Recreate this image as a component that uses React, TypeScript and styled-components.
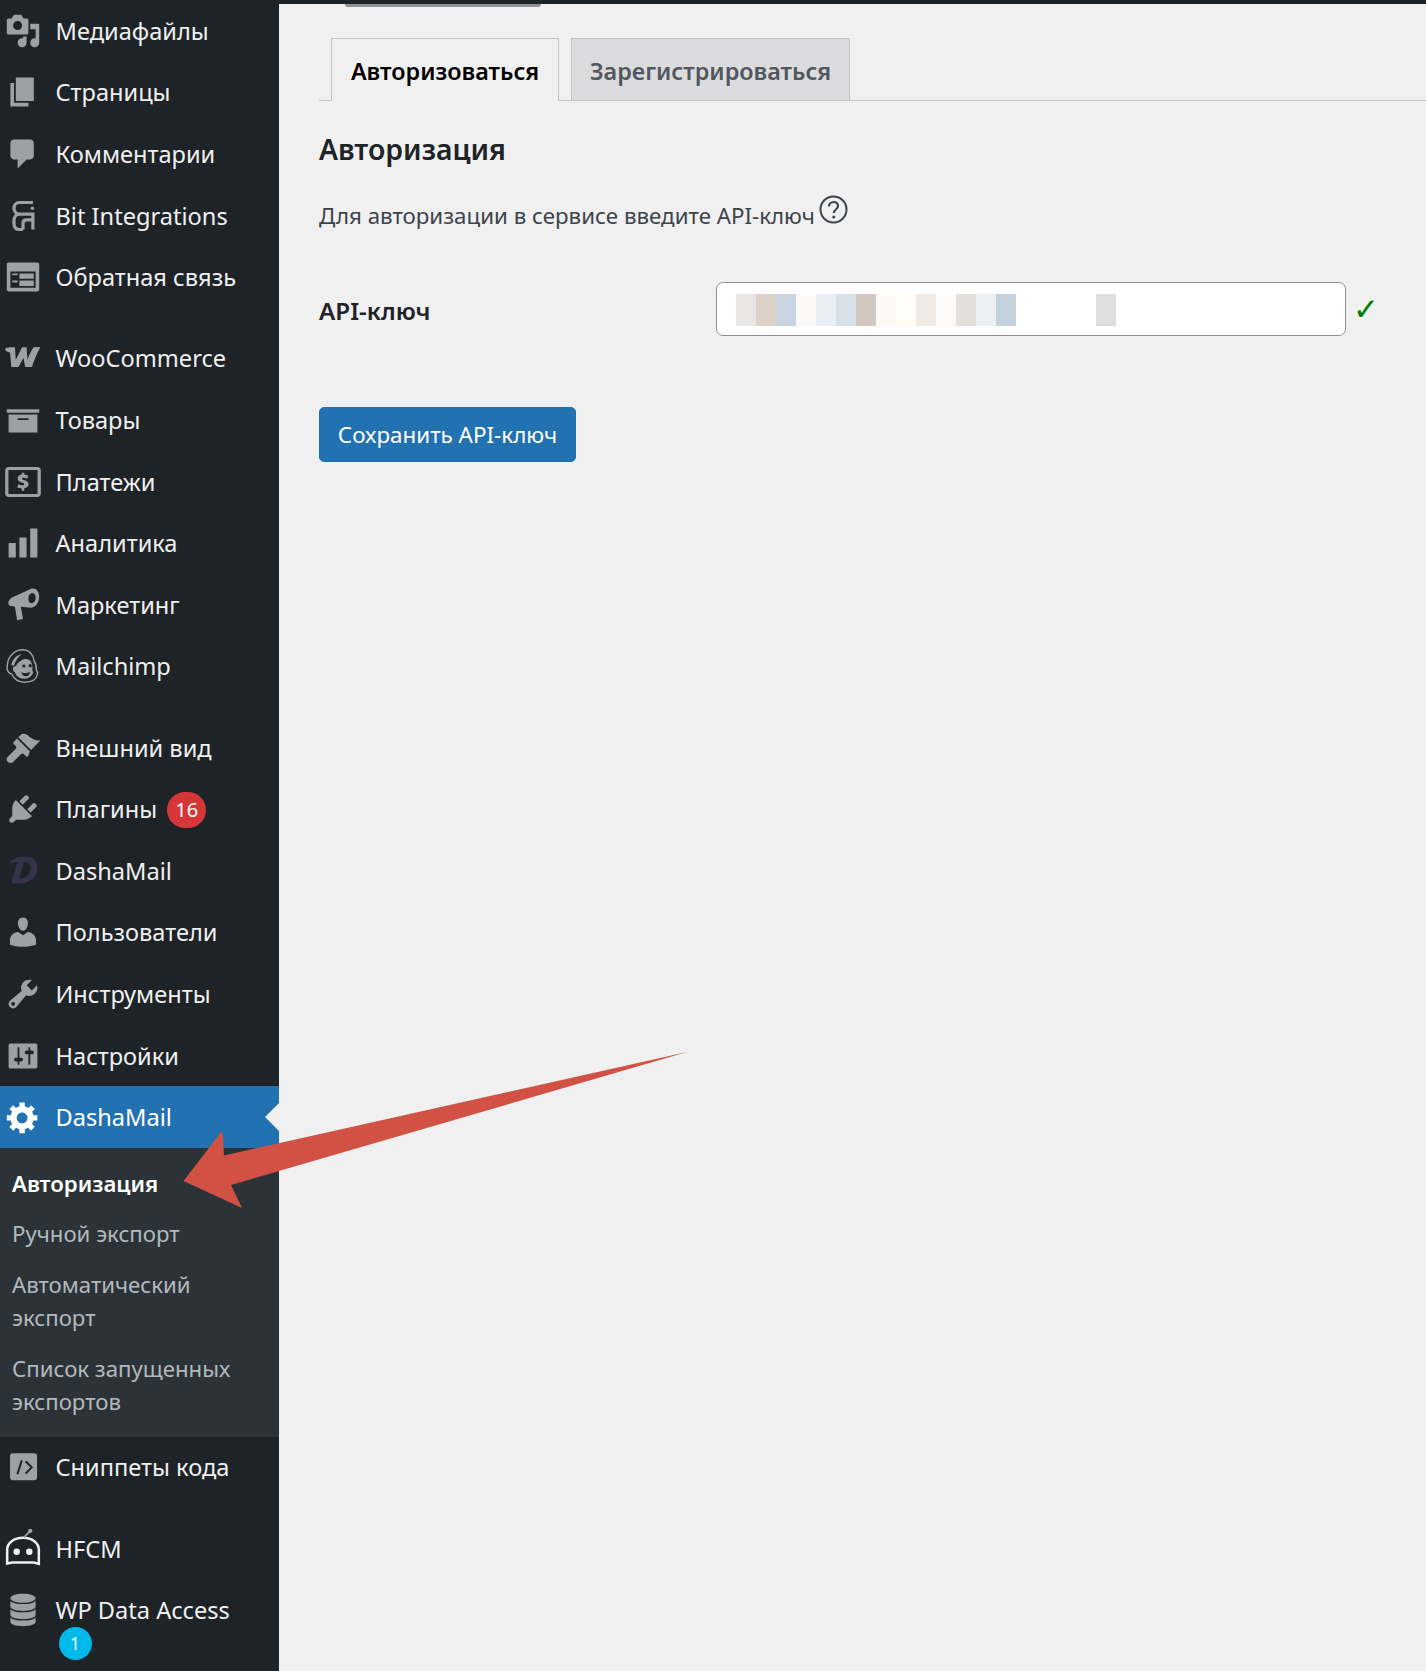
import styled, { createGlobalStyle } from 'styled-components';

const GlobalStyle = createGlobalStyle`
  html, body {
    margin: 0;
    padding: 0;
    height: 100%;
    overflow: hidden;
    background: #f0f0f1;
    font-family: "Noto Sans", "Open Sans", sans-serif;
  }
`;

const Page = styled.div`
  position: relative;
  display: flex;
  width: 1426px;
  height: 1671px;
  overflow: hidden;
`;

const Sidebar = styled.nav`
  flex: 0 0 279px;
  display: flex;
  flex-direction: column;
  background: #1d2327;
`;

const MenuItem = styled.div<{ $current?: boolean; $gapBefore?: boolean }>`
  position: relative;
  display: flex;
  align-items: center;
  flex: 0 0 61.6px;
  gap: 14.5px;
  padding-left: 5px;
  margin-top: ${(p) => (p.$gapBefore ? '19.7px' : '0')};
  color: #f0f0f1;
  background: ${(p) => (p.$current ? '#2271b1' : 'transparent')};
  font-size: 23.6px;
  ${(p) =>
    p.$current &&
    `
    color: #fff;
    &::after {
      content: '';
      position: absolute;
      right: 0;
      top: 50%;
      margin-top: -14px;
      border: 14px solid transparent;
      border-right-color: #f0f0f1;
      border-left-width: 0;
    }
  `}
`;

const TallItem = styled(MenuItem)`
  align-items: flex-start;
  padding-top: 13px;
  box-sizing: border-box;
  flex-basis: 90px;
`;

const IconBox = styled.span`
  flex: 0 0 36px;
  width: 36px;
  height: 36px;
  display: block;
  svg {
    display: block;
    width: 36px;
    height: 36px;
    fill: #9ca1a7;
    overflow: visible;
  }
`;

const CurrentIconBox = styled(IconBox)`
  svg {
    fill: #fff;
  }
`;

const LabelWithCount = styled.span`
  display: flex;
  align-items: center;
  gap: 10px;
`;

const CountBadge = styled.span`
  min-width: 39px;
  height: 36px;
  margin-top: 2px;
  border-radius: 18px;
  background: #d63638;
  color: #fff;
  font-size: 20px;
  line-height: 36px;
  text-align: center;
`;

const LabelStack = styled.span`
  display: flex;
  flex-direction: column;
  align-items: flex-start;
  line-height: 36px;
`;

const RoundBadge = styled.span`
  width: 33px;
  height: 33px;
  margin-left: 3px;
  margin-top: -1px;
  border-radius: 50%;
  background: #00b9eb;
  color: #fff;
  font-size: 18px;
  line-height: 33px;
  text-align: center;
`;

const Submenu = styled.div`
  display: flex;
  flex-direction: column;
  padding: 10.5px 0 9px;
  background: #2c3338;
`;

const SubLink = styled.div<{ $active?: boolean }>`
  padding: 8.5px 12px ${(p) => (p.$active ? '8.5px' : '9.5px')};
  font-size: 22.2px;
  line-height: 33px;
  color: ${(p) => (p.$active ? '#fff' : '#b4b9be')};
  font-weight: ${(p) => (p.$active ? 600 : 400)};
`;

const Main = styled.main`
  flex: 1;
  min-width: 0;
  display: flex;
  flex-direction: column;
`;

const TopBar = styled.div`
  flex: 0 0 4px;
  background: #1d2327;
`;

const TopStub = styled.div`
  flex: 0 0 3px;
  width: 196px;
  margin-left: 66px;
  background: #8f9296;
  border-radius: 0 0 3px 3px;
`;

const Content = styled.div`
  display: flex;
  flex-direction: column;
  align-items: flex-start;
  padding: 31px 0 0 40px;
`;

const Tabs = styled.div`
  align-self: stretch;
  display: flex;
  gap: 12px;
  height: 62px;
  padding-left: 12px;
  border-bottom: 1px solid #c3c4c7;
`;

const Tab = styled.div<{ $active?: boolean }>`
  box-sizing: border-box;
  width: ${(p) => (p.$active ? '228px' : '279px')};
  height: ${(p) => (p.$active ? '63px' : '62px')};
  padding: 2px 0 0;
  display: flex;
  align-items: center;
  justify-content: center;
  border: 1px solid #c3c4c7;
  border-bottom: ${(p) => (p.$active ? '1px solid #f0f0f1' : '0')};
  background: ${(p) => (p.$active ? '#f0f0f1' : '#dcdcde')};
  color: ${(p) => (p.$active ? '#000' : '#50575e')};
  font-size: 23.4px;
  font-weight: 600;
`;

const Heading = styled.h2`
  margin: 29px 0 0;
  color: #1d2327;
  font-size: 28.4px;
  font-weight: 600;
  line-height: 38px;
`;

const Description = styled.p`
  display: flex;
  align-items: flex-start;
  gap: 4px;
  margin: 28px 0 0;
  color: #3c434a;
  font-size: 22.3px;
  line-height: 40px;
  svg {
    width: 29px;
    height: 29px;
    margin-top: -1px;
  }
`;

const FormRow = styled.div`
  display: flex;
  align-items: center;
  margin-top: 46px;
`;

const FieldLabel = styled.label`
  flex: 0 0 397px;
  padding-top: 3px;
  color: #1d2327;
  font-size: 24.2px;
  font-weight: 600;
`;

const KeyInput = styled.div`
  box-sizing: border-box;
  display: flex;
  align-items: center;
  width: 630px;
  height: 54px;
  padding-left: 19px;
  background: #fff;
  border: 1px solid #8c8f94;
  border-radius: 7px;
`;

const Pixel = styled.span<{ $color: string; $skip?: number }>`
  flex: 0 0 20px;
  height: 32px;
  margin-top: 2px;
  margin-left: ${(p) => p.$skip || 0}px;
  background: ${(p) => p.$color};
`;

const Check = styled.span`
  margin-left: 7px;
  color: #008000;
  font-family: "DejaVu Sans", sans-serif;
  font-size: 31px;
  font-weight: 700;
  line-height: 1;
`;

const SaveButton = styled.button`
  margin-top: 71px;
  width: 257px;
  height: 55px;
  padding: 0;
  border: 1px solid #2271b1;
  border-radius: 5px;
  background: #2271b1;
  color: #fff;
  font-family: inherit;
  font-size: 22.4px;
`;

const ArrowOverlay = styled.svg`
  position: absolute;
  left: 0;
  top: 0;
  width: 1426px;
  height: 1671px;
  pointer-events: none;
`;

const Ico = ({ d }: { d: string }) => (
  <svg viewBox="0 0 20 20">
    <path fillRule="evenodd" d={d} />
  </svg>
);

const icons = {
  media:
    'M13 11V4c0-.55-.45-1-1-1h-1.67L9 1H5L3.67 3H2c-.55 0-1 .45-1 1v7c0 .55.45 1 1 1h10c.55 0 1-.45 1-1zM7 4.500c1.380 0 2.500 1.120 2.500 2.500S8.380 9.500 7 9.500 4.500 8.380 4.500 7 5.620 4.500 7 4.500zM14 6h5v10.500c0 1.380-1.120 2.500-2.500 2.500S14 17.880 14 16.500s1.120-2.500 2.500-2.500c.17 0 .34.02.5.05V9h-3V6zm-4 8.050V13h2v3.500c0 1.380-1.120 2.500-2.500 2.500S7 17.880 7 16.500 8.120 14 9.500 14c.17 0 .34.02.5.05z',
  page: 'M6 15V2h10v13H6zm-1 1h8v2H3V5h2v11z',
  comments:
    'M5 2h9c1.100 0 2 .9 2 2v7c0 1.100-.9 2-2 2h-2l-5 5v-5H5c-1.100 0-2-.9-2-2V4c0-1.100.9-2 2-2z',
  feedback:
    'M2 2h16c.55 0 1 .45 1 1v14c0 .55-.45 1-1 1H2c-.55 0-1-.45-1-1V3c0-.55.45-1 1-1zm15 14V7H3v9h14zM4 8v1h3V8H4zm4 0v3h8V8H8zm-4 4v1h3v-1H4zm4 0v3h8v-3H8z',
  woo: 'M.3 4.500C2 3.800 4 4 5.500 4L6 11l3.500-7H12l.5 7c1-3 2.500-6 3.500-7 1-.2 2.500-.2 3.600 0-1.600 3-3.600 7.500-4.600 11h-3.800l-.9-5-2.800 5h-4L2.800 7C2 6.800 1 6.500.3 6z',
  archive: 'M19 4v2H1V4h18zM2 7h16v10H2V7zm11 3V9H7v1h6z',
  bars: 'M18 18V2h-4v16h4zm-6 0V7H8v11h4zm-6 0v-8H2v8h4z',
  megaphone:
    'M14.500 1c2.500-.7 4.500 1.300 4.500 4.300s-1.700 6-4.500 6.200L8.800 11l1.200 6.800-3.300.7L5.500 10.800 3.200 10.500C2 10.300 1.500 9 2 8c.5-1.200 1.500-2 2.500-2.500zM15 3.500c-1.200 0-2 1.300-2 3s.8 2.700 2 2.500 2-1.300 2-3-.8-2.700-2-2.500z',
  brush:
    'M14.480 11.060L7.410 3.990l1.500-1.500c.5-.56 2.300-.47 3.510.32 1.210.8 1.430 1.280 2.910 2.100 1.180.64 2.450 1.260 4.450.85zm-.71.71L6.700 4.700 4.930 6.470c-.39.39-.39 1.020 0 1.410l1.060 1.060c.39.39.39 1.030 0 1.420l-4.400 4.500c-.9.900-.9 2.100 0 2.900.8.800 2 .8 2.900 0l4.500-4.400c.39-.39 1.030-.39 1.420 0l1.060 1.060c.39.39 1.020.39 1.410 0z',
  plugin:
    'M13.110 4.360L9.870 7.600 8 5.730l3.240-3.240c.35-.34 1.050-.2 1.560.32.52.51.66 1.210.31 1.550zm-8 1.770l.91-1.120 9.010 9.010-1.190.84c-.71.71-2.630 1.160-3.820 1.160H6.140L4.900 17.260c-.59.59-1.540.59-2.120 0-.59-.58-.59-1.530 0-2.120l1.240-1.240v-3.880c0-1.130.4-3.190 1.090-3.890zm7.260 3.970l3.240-3.240c.34-.35 1.040-.21 1.550.31.52.51.66 1.210.31 1.550l-3.240 3.250z',
  users:
    'M10 9.250c-2.270 0-2.730-3.440-2.730-3.440C7 4.020 7.820 2 9.970 2c2.160 0 2.980 2.020 2.710 3.810 0 0-.41 3.440-2.680 3.440zm0 2.570L12.720 10c2.390 0 4.520 2.330 4.520 4.530v2.490s-3.650 1.130-7.240 1.130c-3.650 0-7.240-1.130-7.240-1.130v-2.490c0-2.250 1.940-4.480 4.470-4.480z',
  tools:
    'M16.680 9.770c-1.340 1.340-3.300 1.670-4.950.99l-5.410 6.520c-.99.99-2.590.99-3.580 0s-.99-2.590 0-3.570l6.520-5.420c-.68-1.650-.35-3.610.99-4.950 1.280-1.280 3.120-1.620 4.720-1.060l-2.890 2.890 2.820 2.820 2.860-2.870c.53 1.580.18 3.390-1.080 4.650zM3.810 16.210c.4.39 1.040.39 1.430 0 .4-.4.4-1.040 0-1.430-.39-.4-1.030-.4-1.430 0-.39.39-.39 1.030 0 1.430z',
  settings:
    'M18 16V4c0-.55-.45-1-1-1H3c-.55 0-1 .45-1 1v12c0 .55.45 1 1 1h14c.55 0 1-.45 1-1zM8 11h1c.55 0 1 .45 1 1s-.45 1-1 1H8v1.500c0 .28-.22.5-.5.5s-.5-.22-.5-.5V13H6c-.55 0-1-.45-1-1s.45-1 1-1h1V5.500c0-.28.22-.5.5-.5s.5.22.5.5V11zm5-2h-1c-.55 0-1-.45-1-1s.45-1 1-1h1V5.500c0-.28.22-.5.5-.5s.5.22.5.5V7h1c.55 0 1 .45 1 1s-.45 1-1 1h-1v5.500c0 .28-.22.5-.5.5s-.5-.22-.5-.5V9z',
  gear: 'M18 12h-2.180c-.17.7-.44 1.350-.81 1.930l1.540 1.540-2.100 2.100-1.540-1.540c-.58.36-1.230.63-1.910.79V19H8v-2.180c-.68-.16-1.330-.43-1.910-.79l-1.540 1.540-2.120-2.120 1.540-1.540c-.36-.58-.63-1.230-.79-1.910H1V9.030h2.170c.16-.7.44-1.350.8-1.940L2.430 5.550l2.100-2.100 1.540 1.540c.58-.37 1.240-.64 1.930-.81V2h3v2.180c.68.16 1.330.43 1.910.79l1.540-1.540 2.120 2.120-1.540 1.540c.36.59.64 1.240.8 1.940H18V12zm-8.500 1.500c1.660 0 3-1.340 3-3s-1.340-3-3-3-3 1.340-3 3 1.340 3 3 3z',
};

const BitIcon = () => (
  <svg viewBox="0 0 20 20">
    <g fill="none" stroke="#9ca1a7" strokeWidth="1.800">
      <path d="M15.500 2.500H8C6.200 2.500 5 4 5 5.700S6.200 8.900 8 8.900H15.500V17.500" />
      <path d="M8 8.900C6.200 8.900 5 10.500 5 12.500V14.500C5 16.300 6.200 17.500 8 17.500H10" />
      <path d="M15 12.200H12C10.800 12.200 10 13 10 14.200V17.500" />
    </g>
    <circle cx="15.200" cy="5.700" r="1" />
  </svg>
);

const PaymentIcon = () => (
  <svg viewBox="0 0 20 20">
    <rect x="1" y="2.500" width="18" height="15" rx="1.200" fill="none" stroke="#9ca1a7" strokeWidth="1.800" />
    <path d="M10.700 4.800v1.100c.9.1 1.700.3 2.200.6l-.6 1.700c-.6-.3-1.300-.5-2-.5-.6 0-.9.2-.9.5 0 .9 3.700.7 3.700 3.100 0 1.100-.8 2-2.400 2.200v1.300H9.300v-1.200c-1-.1-1.900-.3-2.500-.7l.6-1.700c.7.3 1.500.6 2.300.6.6 0 1-.2 1-.6 0-.9-3.700-.8-3.700-3.100 0-1.100.8-2 2.300-2.200V4.800z" />
  </svg>
);

const ChimpIcon = () => (
  <svg viewBox="0 0 20 20">
    <path
      d="M10 1C5 1 1.500 5 1.300 9.500c-.2 1-.3 2.700.5 3.700.7 1 1.600 1.300 2 1.300C5 17.500 7.500 19 11 19c3.500 0 6.300-1.400 7-4.200.3-1.300-.3-2.400-.7-2.800.3-1.800-.2-3.500-1.200-5C16 4 13.500 1 10 1z"
      fill="none"
      stroke="#9ca1a7"
      strokeWidth=".8"
    />
    <path d="M9 3.500c-2.500.5-5 2.700-5.500 6 .5.3 1 .3 1.500.3C5.800 7 7.500 5 9 3.500zM9 7c2-1.500 5-1 5.800 1.500.5 1.500.6 3 .3 4 .5.5.7 1 .2 2-.9 2-3.500 3-6 2.500-2-.4-3.300-1.700-3.800-3.500-1-.5-1.500-2-.8-3 .4-.5 1-.5 1.500-.3C6.500 8.800 7.500 7.800 9 7z" />
    <circle cx="10.500" cy="10" r=".9" fill="#1d2327" />
    <circle cx="14" cy="9.800" r=".9" fill="#1d2327" />
    <path d="M9 13.500c1.700.8 3.700.6 5-.3-.3 1.700-1.300 2.500-2.500 2.500-1.100 0-2-.8-2.500-2.200z" fill="#1d2327" />
  </svg>
);

const DashaIcon = () => (
  <svg viewBox="0 0 20 20">
    <path
      fillRule="evenodd"
      style={{ fill: '#35324a' }}
      d="M2.500 6C4 3 8 2 11 2c4.500 0 7 2.500 7 6.500 0 5-4.500 8.500-10 8.500H3.500L6.800 4.800C5 5 3.800 5.600 2.500 6zM10.500 5L8 14.200c3.500.2 6-2.500 6.300-5.500C14.500 6.500 13 4.900 10.500 5z"
    />
  </svg>
);

const SnippetIcon = () => (
  <svg viewBox="0 0 20 20">
    <rect x="2.800" y="2.300" width="15" height="15" rx="1.600" />
    <path d="M9.300 6.300L6.900 14M11.500 6.800L14.800 10.200L11.500 13.600" fill="none" stroke="#1d2327" strokeWidth="1.100" />
  </svg>
);

const RobotIcon = () => (
  <svg viewBox="0 0 20 20">
    <path
      d="M1.200 18V10.500C1.200 6.500 5 3.800 10 3.800s8.800 2.700 8.800 6.700V18.300L16 17.500H4z"
      fill="none"
      stroke="#f0f0f1"
      strokeWidth="1.400"
    />
    <path d="M10.500 3.500L13.500 .5" fill="none" stroke="#9ca1a7" strokeWidth="1" />
    <circle cx="14" cy="0" r="1.200" />
    <circle cx="6.500" cy="11.500" r="1.800" style={{ fill: '#f0f0f1' }} />
    <circle cx="13.500" cy="11.500" r="1.800" style={{ fill: '#f0f0f1' }} />
  </svg>
);

const DatabaseIcon = () => (
  <svg viewBox="0 0 20 20">
    <path d="M10 1c3.900 0 7 1 7 2.500S13.900 6 10 6 3 5 3 3.500 6.100 1 10 1zM3 5c1.300 1.300 4 1.700 7 1.700s5.700-.4 7-1.700v3.200C17 9.500 13.900 10.500 10 10.500S3 9.500 3 8.200zM3 9.600c1.300 1.300 4 1.700 7 1.700s5.700-.4 7-1.700v3.200c0 1.300-3.100 2.300-7 2.300s-7-1-7-2.300zM3 14.200c1.300 1.300 4 1.700 7 1.700s5.700-.4 7-1.700v2.500C17 18 13.900 19 10 19s-7-1-7-2.300z" />
  </svg>
);

const HelpIcon = () => (
  <svg viewBox="0 0 29 29">
    <circle cx="14.500" cy="14.500" r="13" fill="none" stroke="#3c434a" strokeWidth="2" />
    <path
      d="M10 11.500C10 8.800 12 7 14.600 7c2.600 0 4.400 1.700 4.400 4 0 3.500-4.200 3.500-4.200 7"
      fill="none"
      stroke="#3c434a"
      strokeWidth="2.200"
    />
    <circle cx="14.800" cy="22" r="1.600" fill="#3c434a" />
  </svg>
);

const pixels = [
  '#e9e7e5', '#ddd2c8', '#c8d4df', '#fbfaf8', '#eaeff5', '#d8e1e9', '#d3c8c0',
  '#fdf9f4', '#fffcf6', '#efeae5', '#fcfbf9', '#e3dfda', '#ecf0f4', '#c5d2dd',
];

const App = () => {
  return (
    <Page>
      <GlobalStyle />
      <Sidebar>
        <MenuItem><IconBox><Ico d={icons.media} /></IconBox>Медиафайлы</MenuItem>
        <MenuItem><IconBox><Ico d={icons.page} /></IconBox>Страницы</MenuItem>
        <MenuItem><IconBox><Ico d={icons.comments} /></IconBox>Комментарии</MenuItem>
        <MenuItem><IconBox><BitIcon /></IconBox>Bit Integrations</MenuItem>
        <MenuItem><IconBox><Ico d={icons.feedback} /></IconBox>Обратная связь</MenuItem>
        <MenuItem $gapBefore><IconBox><Ico d={icons.woo} /></IconBox>WooCommerce</MenuItem>
        <MenuItem><IconBox><Ico d={icons.archive} /></IconBox>Товары</MenuItem>
        <MenuItem><IconBox><PaymentIcon /></IconBox>Платежи</MenuItem>
        <MenuItem><IconBox><Ico d={icons.bars} /></IconBox>Аналитика</MenuItem>
        <MenuItem><IconBox><Ico d={icons.megaphone} /></IconBox>Маркетинг</MenuItem>
        <MenuItem><IconBox><ChimpIcon /></IconBox>Mailchimp</MenuItem>
        <MenuItem $gapBefore><IconBox><Ico d={icons.brush} /></IconBox>Внешний вид</MenuItem>
        <MenuItem>
          <IconBox><Ico d={icons.plugin} /></IconBox>
          <LabelWithCount>Плагины<CountBadge>16</CountBadge></LabelWithCount>
        </MenuItem>
        <MenuItem><IconBox><DashaIcon /></IconBox>DashaMail</MenuItem>
        <MenuItem><IconBox><Ico d={icons.users} /></IconBox>Пользователи</MenuItem>
        <MenuItem><IconBox><Ico d={icons.tools} /></IconBox>Инструменты</MenuItem>
        <MenuItem><IconBox><Ico d={icons.settings} /></IconBox>Настройки</MenuItem>
        <MenuItem $current><CurrentIconBox><Ico d={icons.gear} /></CurrentIconBox>DashaMail</MenuItem>
        <Submenu>
          <SubLink $active>Авторизация</SubLink>
          <SubLink>Ручной экспорт</SubLink>
          <SubLink>Автоматический<br />экспорт</SubLink>
          <SubLink>Список запущенных<br />экспортов</SubLink>
        </Submenu>
        <MenuItem><IconBox><SnippetIcon /></IconBox>Сниппеты кода</MenuItem>
        <MenuItem $gapBefore><IconBox><RobotIcon /></IconBox>HFCM</MenuItem>
        <TallItem>
          <IconBox><DatabaseIcon /></IconBox>
          <LabelStack>
            WP Data Access
            <RoundBadge>1</RoundBadge>
          </LabelStack>
        </TallItem>
      </Sidebar>
      <Main>
        <TopBar />
        <TopStub />
        <Content>
          <Tabs>
            <Tab $active>Авторизоваться</Tab>
            <Tab>Зарегистрироваться</Tab>
          </Tabs>
          <Heading>Авторизация</Heading>
          <Description>
            Для авторизации в сервисе введите API-ключ
            <HelpIcon />
          </Description>
          <FormRow>
            <FieldLabel>API-ключ</FieldLabel>
            <KeyInput>
              {pixels.map((c, i) => (
                <Pixel key={i} $color={c} />
              ))}
              <Pixel $color="#dedede" $skip={80} />
            </KeyInput>
            <Check>✓</Check>
          </FormRow>
          <SaveButton>Сохранить API-ключ</SaveButton>
        </Content>
      </Main>
      <ArrowOverlay viewBox="0 0 1426 1671">
        <path d="M183.500 1181L222.400 1130.400L224 1155.400L687 1052L231 1185L242 1208Z" fill="#d15244" />
      </ArrowOverlay>
    </Page>
  );
};

export default App;
